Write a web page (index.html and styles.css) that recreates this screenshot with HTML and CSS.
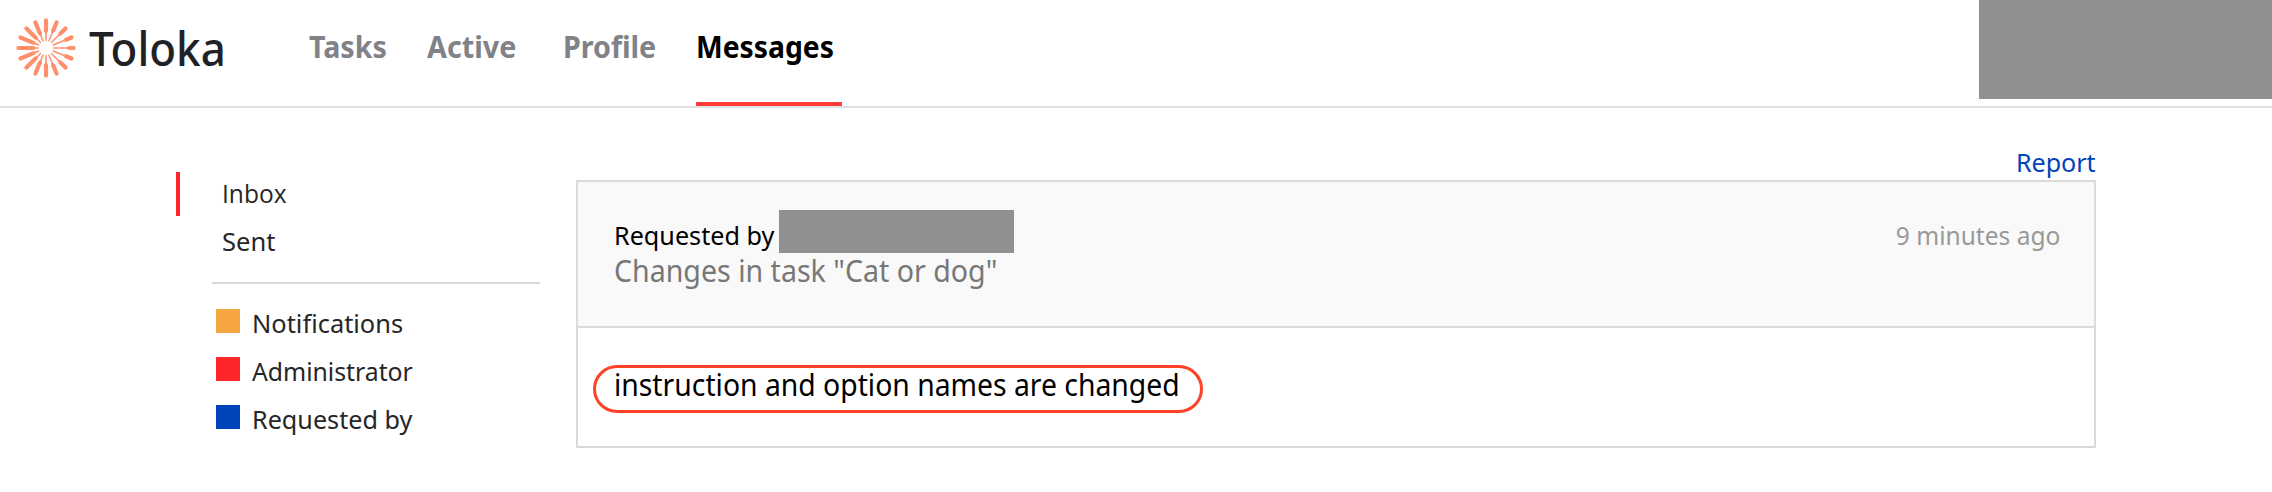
FILE: index.html
```
<!DOCTYPE html>
<html lang="en">
<head>
<meta charset="utf-8">
<title>Toloka – Messages</title>
<link rel="stylesheet" href="styles.css">
</head>
<body>
<header class="header">
  <a class="brand">
    <svg class="brand-mark" viewBox="-30 -30 60 60" aria-hidden="true">
      <defs>
        <path id="stem" d="M7.3 0H24" stroke="#ff8f6b" stroke-width="1.5"/>
      </defs>
      <g id="rays" fill="#ff8f6b">
        <g><use href="#stem"/><path d="M20.5-.7L23-2H27.7A2 2 0 0 1 27.7 2H23L20.5.7Z"/></g>
        <g transform="rotate(-22.5)"><use href="#stem"/><path d="M19-.7L21.5-2.1H27.6A2.1 2.1 0 0 1 27.6 2.1H21.5L19 .7Z"/></g>
        <g transform="rotate(22.5)"><use href="#stem"/><path d="M19-.7L21.5-2.1H27.6A2.1 2.1 0 0 1 27.6 2.1H21.5L19 .7Z"/></g>
        <g transform="rotate(-45)"><use href="#stem"/><path d="M17.5-.7L20-2.1H27.6A2.1 2.1 0 0 1 27.6 2.1H20L17.5 .7Z"/></g>
        <g transform="rotate(45)"><use href="#stem"/><path d="M17.5-.7L20-2.1H27.6A2.1 2.1 0 0 1 27.6 2.1H20L17.5 .7Z"/></g>
        <g transform="rotate(-67.5)"><use href="#stem"/><path d="M16-.7L18.5-2.1H27.6A2.1 2.1 0 0 1 27.6 2.1H18.5L16 .7Z"/></g>
        <g transform="rotate(67.5)"><use href="#stem"/><path d="M16-.7L18.5-2.1H27.6A2.1 2.1 0 0 1 27.6 2.1H18.5L16 .7Z"/></g>
        <g transform="rotate(-90)"><use href="#stem"/><path d="M14.5-.7L17-2.1H27.6A2.1 2.1 0 0 1 27.6 2.1H17L14.5 .7Z"/></g>
        <g transform="rotate(90)"><use href="#stem"/><path d="M14.5-.7L17-2.1H27.6A2.1 2.1 0 0 1 27.6 2.1H17L14.5 .7Z"/></g>
        <g transform="rotate(-112.5)"><use href="#stem"/><path d="M13-.7L15.5-2.1H27.6A2.1 2.1 0 0 1 27.6 2.1H15.5L13 .7Z"/></g>
        <g transform="rotate(112.5)"><use href="#stem"/><path d="M13-.7L15.5-2.1H27.6A2.1 2.1 0 0 1 27.6 2.1H15.5L13 .7Z"/></g>
        <g transform="rotate(-135)"><use href="#stem"/><path d="M12-.7L14.5-2.1H27.6A2.1 2.1 0 0 1 27.6 2.1H14.5L12 .7Z"/></g>
        <g transform="rotate(135)"><use href="#stem"/><path d="M12-.7L14.5-2.1H27.6A2.1 2.1 0 0 1 27.6 2.1H14.5L12 .7Z"/></g>
        <g transform="rotate(-157.5)"><use href="#stem"/><path d="M11-.7L13.5-2.1H27.6A2.1 2.1 0 0 1 27.6 2.1H13.5L11 .7Z"/></g>
        <g transform="rotate(157.5)"><use href="#stem"/><path d="M11-.7L13.5-2.1H27.6A2.1 2.1 0 0 1 27.6 2.1H13.5L11 .7Z"/></g>
        <g transform="rotate(180)"><use href="#stem"/><path d="M10-.7L12.5-2.1H27.6A2.1 2.1 0 0 1 27.6 2.1H12.5L10 .7Z"/></g>
      </g>
    </svg>
    <span class="brand-name">Toloka</span>
  </a>
  <nav class="nav">
    <a class="tab"><span class="fit fit-tasks">Tasks</span></a>
    <a class="tab"><span class="fit fit-active">Active</span></a>
    <a class="tab"><span class="fit fit-profile">Profile</span></a>
    <a class="tab tab-current"><span class="fit fit-messages">Messages</span></a>
  </nav>
  <div class="account"></div>
</header>
<main class="page">
  <aside class="sidebar">
    <a class="folder folder-current"><span class="fit fit-inbox">Inbox</span></a>
    <a class="folder"><span class="fit fit-sent">Sent</span></a>
    <hr class="divider">
    <a class="label"><i class="swatch orange"></i><span class="fit fit-notifications">Notifications</span></a>
    <a class="label"><i class="swatch red"></i><span class="fit fit-administrator">Administrator</span></a>
    <a class="label"><i class="swatch blue"></i><span class="fit fit-requested">Requested by</span></a>
  </aside>
  <section class="thread">
    <a class="report"><span class="fit fit-report">Report</span></a>
    <article class="card">
      <div class="card-head">
        <div class="summary">
          <div class="sender"><span class="fit fit-requested">Requested by</span><span class="sender-name"></span></div>
          <div class="subject"><span class="fit fit-subject">Changes in task "Cat or dog"</span></div>
        </div>
        <time class="time"><span class="fit fit-time">9 minutes ago</span></time>
      </div>
      <div class="card-body">
        <p class="message"><span class="fit fit-message">instruction and option names are changed</span></p>
      </div>
    </article>
  </section>
</main>
</body>
</html>
```
FILE: styles.css
```
* { box-sizing: border-box; }
body {
  margin: 0;
  background: #fff;
  color: #262626;
  font: 26px/48px "Noto Sans", sans-serif;
}

.fit { display: inline-block; white-space: nowrap; transform-origin: 0 50%; }
.fit-tasks { transform: scaleX(.953); }
.fit-active { transform: scaleX(.958); }
.fit-profile { transform: scaleX(.955); }
.fit-messages { transform: scaleX(.943); }
.fit-inbox { font-family: "Open Sans", sans-serif; transform: scaleX(.944); }
.fit-sent { transform: scaleX(.981); }
.fit-notifications { transform: scaleX(.977); }
.fit-administrator { transform: scaleX(.952); }
.fit-requested { transform: scaleX(.968); }
.fit-subject { transform: scaleX(.952); }
.fit-message { transform: scaleX(.944); }
.fit-report { transform: scaleX(.965); transform-origin: 100% 50%; }
.fit-time { transform: scaleX(.944); transform-origin: 100% 50%; }

.header {
  display: flex;
  height: 108px;
  border-bottom: 2px solid #e0e0e0;
}
.brand { display: flex; width: 309.3px; padding: 18px 0 0 16px; }
.brand-mark { width: 60px; height: 60px; flex: none; }
.brand-name {
  height: 60px;
  margin-left: 12.5px;
  color: #1e2126;
  font-size: 46.5px;
  font-weight: 500;
  line-height: 60px;
  transform: scaleX(.944);
  transform-origin: 0 50%;
}
.nav { display: grid; grid-template-columns: 117.8px 135.7px 133.2px 146px; }
.tab {
  height: 106px;
  color: #7f8286;
  font-size: 30px;
  font-weight: 700;
  line-height: 94px;
}
.tab-current { color: #000; border-bottom: 4px solid #ff3b3b; }
.account {
  width: 293.5px;
  height: 98.5px;
  margin-left: auto;
  background: #909090;
}

.page { display: flex; padding-left: 176px; }
.sidebar { width: 364px; padding-top: 61px; }
.folder { display: block; height: 48px; padding-left: 46px; }
.folder-current {
  height: 44px;
  margin: 3px 0 1px;
  border-left: 4px solid #ff2529;
  padding-left: 42px;
  line-height: 42px;
}
.divider {
  height: 2px;
  margin: 17px 0 15px 36px;
  border: 0;
  background: #d8d8d8;
}
.label { display: flex; height: 48px; padding-left: 40px; }
.swatch { width: 24px; height: 24px; margin: 10px 12px 0 0; }
.orange { background: #f5a640; }
.red { background: #ff2529; }
.blue { background: #0044bb; }

.thread { width: 1520px; margin-left: 36px; padding-top: 30px; }
.report { display: block; height: 42px; color: #0044bb; text-align: right; }
.card { height: 268px; border: 2px solid #dadada; color: #000; }
.card-head {
  display: flex;
  justify-content: space-between;
  height: 146px;
  padding: 28px 34px 0 35.6px;
  border-bottom: 2px solid #dadada;
  background: #f9f9f9;
}
.sender { display: flex; height: 43px; }
.sender .fit { width: 165.7px; line-height: 50px; }
.sender-name {
  width: 234.5px;
  height: 42.5px;
  background: #909090;
}
.subject { height: 40px; color: #777; font-size: 30px; line-height: 36px; }
.time { color: #999; line-height: 50px; }
.card-body { padding: 37px 0 0 15px; }
.message {
  width: 609.5px;
  height: 48px;
  margin: 0;
  border: 3px solid #ff4128;
  border-radius: 24px;
  padding-left: 17.6px;
  font-size: 30px;
  line-height: 34px;
}
```
